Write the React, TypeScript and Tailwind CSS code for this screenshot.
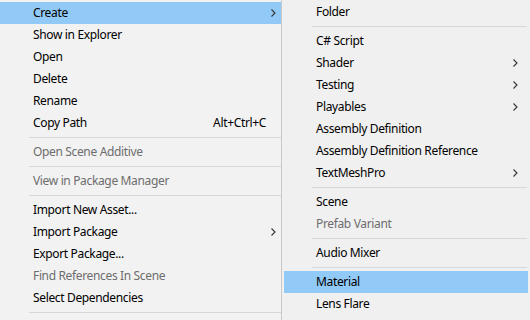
type Item =
  | { sep: true }
  | { sep?: false; label: string; sub?: boolean; disabled?: boolean; hot?: boolean; shortcut?: string };

const left: Item[] = [
  { label: "Create", sub: true, hot: true },
  { label: "Show in Explorer" },
  { label: "Open" },
  { label: "Delete" },
  { label: "Rename" },
  { label: "Copy Path", shortcut: "Alt+Ctrl+C" },
  { sep: true },
  { label: "Open Scene Additive", disabled: true },
  { sep: true },
  { label: "View in Package Manager", disabled: true },
  { sep: true },
  { label: "Import New Asset..." },
  { label: "Import Package", sub: true },
  { label: "Export Package..." },
  { label: "Find References In Scene", disabled: true },
  { label: "Select Dependencies" },
  { sep: true },
];

const right: Item[] = [
  { label: "Folder" },
  { sep: true },
  { label: "C# Script" },
  { label: "Shader", sub: true },
  { label: "Testing", sub: true },
  { label: "Playables", sub: true },
  { label: "Assembly Definition" },
  { label: "Assembly Definition Reference" },
  { label: "TextMeshPro", sub: true },
  { sep: true },
  { label: "Scene" },
  { label: "Prefab Variant", disabled: true },
  { sep: true },
  { label: "Audio Mixer" },
  { sep: true },
  { label: "Material", hot: true },
  { label: "Lens Flare" },
];

function Chevron() {
  return (
    <svg width="5" height="8" viewBox="0 0 5 8" className="shrink-0">
      <path d="M0.5 0.5 L4 4 L0.5 7.5" fill="none" stroke="#333" strokeWidth="1.1" />
    </svg>
  );
}

function Menu({ items, textPad, sepLeft, chevPad }: { items: Item[]; textPad: string; sepLeft: string; chevPad: string }) {
  return (
    <div className="flex flex-col">
      {items.map((it, i) =>
        it.sep ? (
          <div key={i} className={`h-[7px] flex items-center ${sepLeft}`}>
            <div className="h-px w-full bg-[#d7d7d7]" />
          </div>
        ) : (
          <div
            key={i}
            className={`h-[22px] flex items-center ${textPad} ${chevPad} ${it.hot ? "bg-[#91c9f7]" : ""} ${
              it.disabled ? "text-[#6d6d6d]" : "text-black"
            }`}
          >
            <span className="flex-1 whitespace-nowrap">{it.label}</span>
            {it.shortcut && <span className="mr-[10px] whitespace-nowrap">{it.shortcut}</span>}
            {it.sub && <Chevron />}
          </div>
        )
      )}
    </div>
  );
}

export default function App() {
  return (
    <div
      className="flex w-[530px] h-[320px] overflow-hidden bg-[#f2f2f2] text-[12px] tracking-[-0.35px]"
      style={{ fontFamily: '"Segoe UI", "Noto Sans", sans-serif' }}
    >
      <div className="w-[282px] shrink-0 border-r border-[#c8c8c8] pt-[2px]">
        <Menu items={left} textPad="pl-[33px]" sepLeft="pl-[29px]" chevPad="pr-[5px]" />
      </div>
      <div className="flex-1 pt-[1px] px-[2px] bg-[#f0f0f0]">
        <Menu items={right} textPad="pl-[32px]" sepLeft="pl-[28px] pr-px" chevPad="pr-[10px]" />
      </div>
    </div>
  );
}
